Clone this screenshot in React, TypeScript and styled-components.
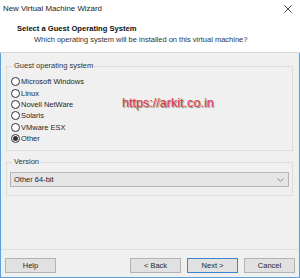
import React from 'react';
import styled, { createGlobalStyle } from 'styled-components';

const GlobalStyle = createGlobalStyle`
  html, body {
    margin: 0;
    padding: 0;
    background: #ffffff;
  }
  * {
    box-sizing: border-box;
  }
`;

const StyledWindow = styled.div`
  position: relative;
  width: 300px;
  height: 278px;
  display: flex;
  flex-direction: column;
  font-family: 'Liberation Sans', Arial, sans-serif;
  font-size: 7.5px;
  color: #262626;
  background: #ffffff;
  overflow: hidden;
`;

const StyledTitleBar = styled.div`
  height: 17px;
  display: flex;
  align-items: center;
  justify-content: space-between;
  padding: 0 8px 0 3px;
  font-size: 7.9px;
  color: #1a1a1a;
`;

const StyledHeader = styled.div`
  height: 36px;
  padding: 6px 0 0 17px;
  border-bottom: 1px solid #d9d9d9;
  display: flex;
  flex-direction: column;
`;

const StyledHeaderTitle = styled.div`
  font-weight: bold;
  font-size: 7.6px;
  line-height: 11px;
  color: #111;
`;

const StyledHeaderSubtitle = styled.div`
  padding-left: 17px;
  line-height: 11px;
  color: #333;
`;

const StyledBody = styled.div`
  flex: 1;
  display: flex;
  flex-direction: column;
  background: #f0f0f0;
  border: 1px solid #5c9fdb;
  border-top: none;
`;

const StyledContent = styled.div`
  flex: 1;
  padding: 8px 6px 0 5px;
  display: flex;
  flex-direction: column;
  gap: 6px;
`;

const StyledGroup = styled.fieldset<{ $padTop: number; $padBottom: number }>`
  margin: 0;
  border: 1px solid #dcdcdc;
  padding: ${(p) => p.$padTop}px 3px ${(p) => p.$padBottom}px 3px;
  min-width: 0;
`;

const StyledLegend = styled.legend`
  margin-left: 3px;
  padding: 0 1px;
  line-height: 10px;
  color: #333;
`;

const StyledRadioList = styled.div`
  display: flex;
  flex-direction: column;
  padding-left: 1px;
`;

const StyledRadioRow = styled.label`
  height: 11.4px;
  display: flex;
  align-items: center;
  gap: 1px;
  color: #262626;
`;

const StyledRadioCircle = styled.span<{ $checked?: boolean }>`
  width: 9px;
  height: 9px;
  border: 1px solid #333;
  border-radius: 50%;
  display: inline-flex;
  align-items: center;
  justify-content: center;
  background: #fff;

  &::after {
    content: '';
    width: 5px;
    height: 5px;
    border-radius: 50%;
    background: ${(p) => (p.$checked ? '#333' : 'transparent')};
  }
`;

const StyledSelect = styled.div`
  height: 15px;
  display: flex;
  align-items: center;
  justify-content: space-between;
  padding: 0 4px 0 3px;
  background: #e5e5e5;
  border: 1px solid #b5b5b5;
  color: #262626;
`;

const StyledFooter = styled.div`
  height: 28px;
  border-top: 1px solid #dfdfdf;
  display: flex;
  align-items: flex-start;
  padding: 8px 4px 0 4px;
  gap: 6px;
`;

const StyledSpacer = styled.div`
  flex: 1;
`;

const StyledButton = styled.div<{ $default?: boolean }>`
  width: 51px;
  height: 15px;
  display: flex;
  align-items: center;
  justify-content: center;
  background: #e1e1e1;
  border: 1px solid ${(p) => (p.$default ? '#3d86cf' : '#b3b3b3')};
  color: #262626;
`;

const StyledWatermark = styled.div`
  position: absolute;
  left: 122px;
  top: 96px;
  font-family: 'Liberation Sans', Arial, sans-serif;
  font-size: 12.6px;
  line-height: 15px;
  color: #e0353d;
  text-shadow: 1px 1px 1px rgba(0, 0, 0, 0.45);
`;

const CloseIcon = () => (
  <svg width="8" height="8" viewBox="0 0 8 8">
    <path d="M0.5 0.5 L7.5 7.5 M7.5 0.5 L0.5 7.5" stroke="#333" strokeWidth="0.9" fill="none" />
  </svg>
);

const ChevronIcon = () => (
  <svg width="7" height="4" viewBox="0 0 7 4">
    <path d="M0.5 0.5 L3.5 3.3 L6.5 0.5" stroke="#777" strokeWidth="0.8" fill="none" />
  </svg>
);

const systems = ['Microsoft Windows', 'Linux', 'Novell NetWare', 'Solaris', 'VMware ESX', 'Other'];

const App = () => {
  return (
    <>
      <GlobalStyle />
      <StyledWindow>
        <StyledTitleBar>
          <span>New Virtual Machine Wizard</span>
          <CloseIcon />
        </StyledTitleBar>
        <StyledHeader>
          <StyledHeaderTitle>Select a Guest Operating System</StyledHeaderTitle>
          <StyledHeaderSubtitle>Which operating system will be installed on this virtual machine?</StyledHeaderSubtitle>
        </StyledHeader>
        <StyledBody>
          <StyledContent>
            <StyledGroup $padTop={5} $padBottom={6}>
              <StyledLegend>Guest operating system</StyledLegend>
              <StyledRadioList>
                {systems.map((name) => (
                  <StyledRadioRow key={name}>
                    <StyledRadioCircle $checked={name === 'Other'} />
                    {name}
                  </StyledRadioRow>
                ))}
              </StyledRadioList>
            </StyledGroup>
            <StyledGroup $padTop={5} $padBottom={8}>
              <StyledLegend>Version</StyledLegend>
              <StyledSelect>
                <span>Other 64-bit</span>
                <ChevronIcon />
              </StyledSelect>
            </StyledGroup>
          </StyledContent>
          <StyledFooter>
            <StyledButton>Help</StyledButton>
            <StyledSpacer />
            <StyledButton>&lt; Back</StyledButton>
            <StyledButton $default>Next &gt;</StyledButton>
            <StyledButton>Cancel</StyledButton>
          </StyledFooter>
        </StyledBody>
        <StyledWatermark>https://arkit.co.in</StyledWatermark>
      </StyledWindow>
    </>
  );
};

export default App;
